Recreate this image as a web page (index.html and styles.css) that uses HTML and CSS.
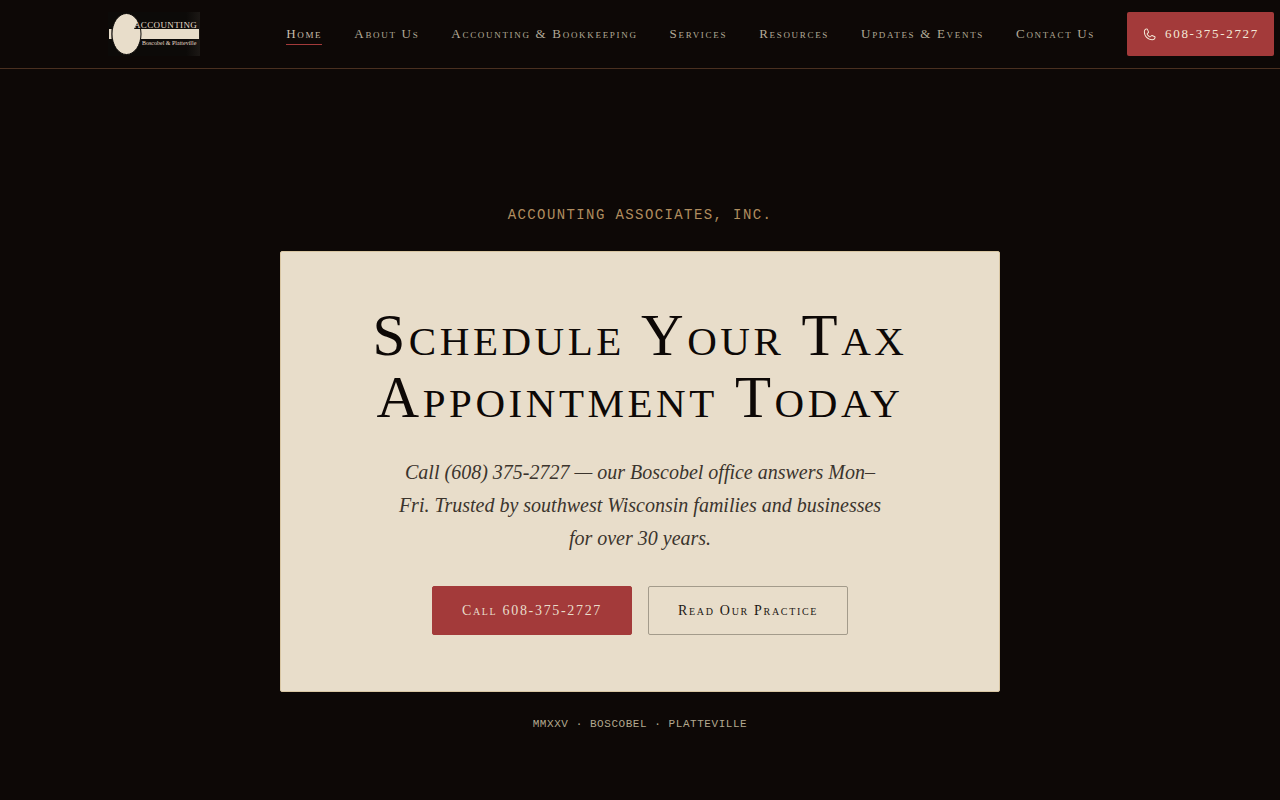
FILE: index.html
```html
<!DOCTYPE html>
<html lang="en">
<head>
    <meta charset="UTF-8">
    <meta name="viewport" content="width=device-width, initial-scale=1.0">
    <title>Accounting Associates, Inc.</title>
    <link rel="stylesheet" href="styles.css">
</head>
<body>
    <header class="header">
        <a href="#" class="logo" aria-label="Accounting Associates home">
            <svg width="92" height="44" viewBox="0 0 92 44">
                <defs>
                    <linearGradient id="logoShade">
                        <stop offset="0.85" stop-color="#0c0a08"/>
                        <stop offset="1" stop-color="#1c1815"/>
                    </linearGradient>
                </defs>
                <rect width="92" height="44" fill="url(#logoShade)"/>
                <rect x="1" y="17" width="90" height="10" fill="#e8ddca"/>
                <path d="M3.500 17v10" stroke="#8d857a"/>
                <ellipse cx="18.500" cy="22" rx="14.500" ry="20.500" fill="#e8ddca" stroke="#0c0a08"/>
                <path d="M26 17l4-8h4v8z" fill="#0c0a08"/>
                <text x="26" y="16" class="logo-name">ACCOUNTING</text>
                <text x="34" y="33" class="logo-place">Boscobel &amp; Platteville</text>
            </svg>
        </a>

        <nav class="nav-links">
            <a href="#" class="active">Home</a>
            <a href="#">About Us</a>
            <a href="#">Accounting &amp; Bookkeeping</a>
            <a href="#">Services</a>
            <a href="#">Resources</a>
            <a href="#">Updates &amp; Events</a>
            <a href="#">Contact Us</a>
            <a href="tel:6083752727" class="phone">
                <svg width="15" height="15" viewBox="0 0 256 256" fill="currentColor" aria-hidden="true">
                    <path d="M222.37 158.46l-47.11-21.11-.13-.06a16 16 0 0 0-15.17 1.4 8.12 8.12 0 0 0-.75.56L134.87 160c-15.42-7.49-31.34-23.29-38.83-38.51l20.78-24.71c.2-.25.39-.5.57-.77a16 16 0 0 0 1.32-15.06v-.12L97.54 33.64a16 16 0 0 0-16.62-9.52A56.26 56.26 0 0 0 32 80c0 79.4 64.6 144 144 144a56.26 56.26 0 0 0 55.88-48.92 16 16 0 0 0-9.51-16.62zM176 208A128.14 128.14 0 0 1 48 80a40.2 40.2 0 0 1 34.87-40v.12l21 47L83.2 111.86a6.13 6.13 0 0 0-.57.77 16 16 0 0 0-1 15.7c9.06 18.53 27.73 37.06 46.46 46.11a16 16 0 0 0 15.75-1.14 8.44 8.44 0 0 0 .74-.56L168.89 152l47 21.05h.11A40.21 40.21 0 0 1 176 208z"/>
                </svg>
                <span>608-375-2727</span>
            </a>
        </nav>
    </header>

    <main class="hero">
        <p class="eyebrow">ACCOUNTING ASSOCIATES, INC.</p>

        <section class="card">
            <h1>Schedule Your Tax Appointment Today</h1>
            <p class="lead">Call (608) 375-2727 — our Boscobel office answers Mon–Fri. Trusted by southwest Wisconsin families and businesses for over 30 years.</p>
            <div class="actions">
                <a href="tel:6083752727" class="btn btn-primary">Call 608-375-2727</a>
                <a href="#" class="btn btn-outline">Read Our Practice</a>
            </div>
        </section>

        <p class="footnote">MMXXV · BOSCOBEL · PLATTEVILLE</p>
    </main>
</body>
</html>
```
FILE: styles.css
```css
* {
    margin: 0;
    padding: 0;
    box-sizing: border-box;
}

body {
    font-family: "Liberation Serif", serif;
    background: #0d0806;
    color: #e8ddca;
    min-height: 100vh;
}

a {
    color: inherit;
    text-decoration: none;
}

.header {
    display: flex;
    align-items: center;
    justify-content: space-between;
    padding: 12px 6px 12px 108px;
    border-bottom: 1px solid #4a3020;
}

.logo svg {
    display: block;
}

.logo-name {
    font-size: 9px;
    letter-spacing: 0.04em;
    fill: #e8ddca;
}

.logo-place {
    font-size: 6px;
    fill: #e8ddca;
}

.nav-links {
    display: flex;
    align-items: center;
    gap: 32px;
    font-size: 13px;
    line-height: 20px;
    font-variant: small-caps;
    letter-spacing: 0.13em;
    white-space: nowrap;
    color: #b3aa97;
}

.nav-links .active {
    border-bottom: 1px solid #a33a3a;
    color: #c8beab;
}

.nav-links .phone {
    display: flex;
    align-items: center;
    gap: 8px;
    height: 44px;
    padding: 0 15px;
    border-radius: 2px;
    background: #a33a3a;
    color: #f3e9d8;
}

.hero {
    display: flex;
    flex-direction: column;
    align-items: center;
    padding: 136px 24px 60px;
    text-align: center;
}

.eyebrow {
    font-family: "Liberation Mono", monospace;
    font-size: 14px;
    line-height: 20px;
    letter-spacing: 0.1em;
    color: #b08d5f;
    margin-bottom: 26px;
}

.card {
    width: 100%;
    max-width: 720px;
    padding: 52px 56px 56px;
    background: #e8ddca;
    border: 1px solid #d9c6a3;
    border-radius: 2px;
    color: #0d0806;
}

.card h1 {
    font-size: 59px;
    font-weight: 400;
    line-height: 62px;
    font-variant: small-caps;
    letter-spacing: 0.06em;
    margin-bottom: 28px;
}

.lead {
    max-width: 490px;
    margin: 0 auto 31px;
    font-size: 20px;
    font-style: italic;
    line-height: 33px;
    color: #3b342d;
}

.actions {
    display: flex;
    justify-content: center;
    flex-wrap: wrap;
    gap: 16px;
}

.btn {
    padding: 13px 29px;
    border: 1px solid #a33a3a;
    border-radius: 2px;
    font-size: 14px;
    line-height: 21px;
    font-variant: small-caps;
    letter-spacing: 0.12em;
}

.btn-primary {
    background: #a33a3a;
    color: #e8ddca;
}

.btn-outline {
    border-color: #a39b8b;
    color: #1d1814;
}

.footnote {
    margin-top: 24px;
    font-family: "Liberation Mono", monospace;
    font-size: 11px;
    line-height: 16px;
    letter-spacing: 0.05em;
    color: #b3a88f;
}
```
